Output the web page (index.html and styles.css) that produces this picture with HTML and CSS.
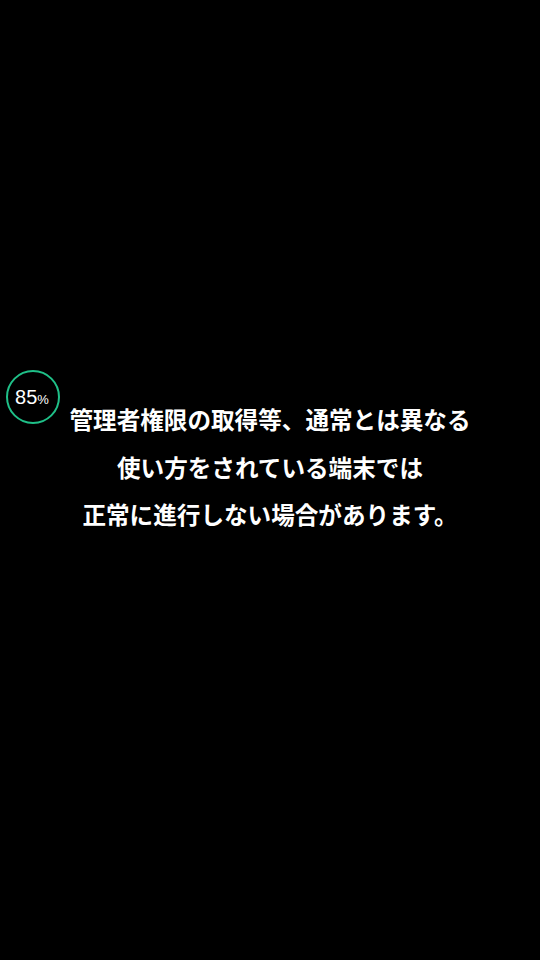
FILE: index.html
```html
<!DOCTYPE html>
<html lang="ja">
<head>
<meta charset="utf-8">
<link rel="stylesheet" href="styles.css">
</head>
<body>
<div class="screen">
  <div class="progress"><span class="num">85</span><span class="pct">%</span></div>
  <div class="message">
    <p>管理者権限の取得等、通常とは異なる</p>
    <p>使い方をされている端末では</p>
    <p>正常に進行しない場合があります。</p>
  </div>
</div>
</body>
</html>
```
FILE: styles.css
```css
html, body {
  margin: 0;
  padding: 0;
  background: #000;
}
.screen {
  position: relative;
  width: 540px;
  height: 960px;
  background: #000;
  overflow: hidden;
}
.progress {
  position: absolute;
  left: 6px;
  top: 370px;
  width: 50px;
  height: 50px;
  border: 2px solid #1fc088;
  border-radius: 50%;
  display: flex;
  align-items: center;
  justify-content: center;
  color: #fff;
  font-family: "Liberation Sans", Arimo, sans-serif;
}
.progress .num {
  font-size: 20px;
  line-height: 1;
  margin-left: -2px;
}
.progress .pct {
  font-size: 13px;
  line-height: 1;
  margin-top: 5px;
}
.message {
  padding-top: 396px;
  text-align: center;
  color: #fff;
  font-family: "Noto Sans CJK JP", sans-serif;
  font-weight: bold;
  font-size: 23.6px;
  line-height: 47.5px;
}
.message p {
  margin: 0;
}
```
